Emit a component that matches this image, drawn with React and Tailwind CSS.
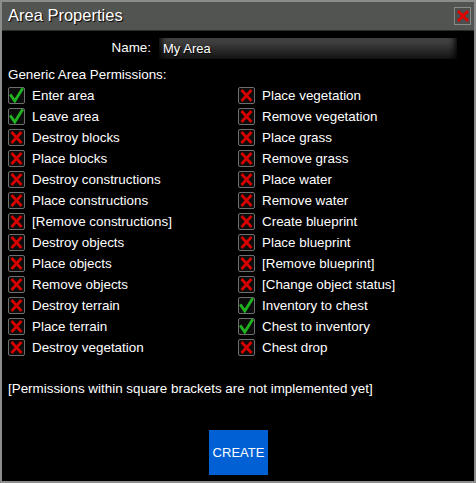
import { useState } from "react";

const left = [
  ["Enter area", true],
  ["Leave area", true],
  ["Destroy blocks", false],
  ["Place blocks", false],
  ["Destroy constructions", false],
  ["Place constructions", false],
  ["[Remove constructions]", false],
  ["Destroy objects", false],
  ["Place objects", false],
  ["Remove objects", false],
  ["Destroy terrain", false],
  ["Place terrain", false],
  ["Destroy vegetation", false],
];

const right = [
  ["Place vegetation", false],
  ["Remove vegetation", false],
  ["Place grass", false],
  ["Remove grass", false],
  ["Place water", false],
  ["Remove water", false],
  ["Create blueprint", false],
  ["Place blueprint", false],
  ["[Remove blueprint]", false],
  ["[Change object status]", false],
  ["Inventory to chest", true],
  ["Chest to inventory", true],
  ["Chest drop", false],
];

function Check({ on }) {
  return (
    <span className="w-[17px] h-[17px] border border-[#6e6e6e] rounded-[2px] bg-[#0c0c0c] flex items-center justify-center shrink-0">
      {on ? (
        <svg width="15" height="15" viewBox="0 0 15 15">
          <path d="M2 7.5 L5.8 13 L13 1.5" fill="none" stroke="#1fb41f" strokeWidth="2.8" strokeLinecap="square" />
        </svg>
      ) : (
        <svg width="15" height="15" viewBox="0 0 15 15">
          <path d="M2.5 2 L12.5 13 M12.5 2 L2.5 13" fill="none" stroke="#d60000" strokeWidth="2.8" />
        </svg>
      )}
    </span>
  );
}

function Row({ label, on }) {
  return (
    <div className="h-[21px] flex items-center gap-[7px]">
      <Check on={on} />
      <span>{label}</span>
    </div>
  );
}

export default function App() {
  const [name] = useState("My Area");

  return (
    <div
      className="w-[476px] h-[483px] border-2 border-[#8c8c8c] bg-black text-white flex flex-col text-[13.4px] leading-[15px]"
      style={{ fontFamily: '"Liberation Sans", Arial, sans-serif' }}
    >
      {/* title bar */}
      <div className="h-[29px] bg-[#525452] border-b border-[#2a2a2a] flex items-center justify-between pl-[6px] pr-[3px]">
        <span className="text-[16.5px] -mt-[2px] [text-shadow:1px_1px_1px_#000]">Area Properties</span>
        <button className="w-[17px] h-[18px] border border-[#8a8a8a] bg-[#4c4e4c] flex items-center justify-center">
          <svg width="14" height="14" viewBox="0 0 14 14">
            <path d="M2 2 L12 12 M12 2 L2 12" stroke="#e00000" strokeWidth="2.8" />
          </svg>
        </button>
      </div>

      <div className="flex-1 flex flex-col px-[6px] pt-[7px]">
        <div className="flex items-center gap-[8px]">
          <span className="w-[143px] text-right -mt-[2px]">Name:</span>
          <div className="w-[298px] h-[21px] flex items-center pl-[4px] text-[13px] bg-gradient-to-b from-[#4a4a4a] via-[#2e2e2e] to-[#141414] shadow-[inset_6px_0_6px_-4px_#000,inset_-6px_0_6px_-4px_#000] [text-shadow:1px_1px_1px_#000]">
            {name}
          </div>
        </div>

        <div className="mt-[8px]">Generic Area Permissions:</div>

        <div className="mt-[3px] grid grid-cols-[230px_1fr]">
          <div className="flex flex-col">
            {left.map(([l, on]) => (
              <Row key={l} label={l} on={on} />
            ))}
          </div>
          <div className="flex flex-col">
            {right.map(([l, on]) => (
              <Row key={l} label={l} on={on} />
            ))}
          </div>
        </div>

        <div className="mt-[23px]">[Permissions within square brackets are not implemented yet]</div>

        <div className="mt-[34px] flex justify-center">
          <button className="w-[59px] h-[45px] bg-[#0060d4] text-white text-[13px] ml-[1px]">CREATE</button>
        </div>
      </div>
    </div>
  );
}
